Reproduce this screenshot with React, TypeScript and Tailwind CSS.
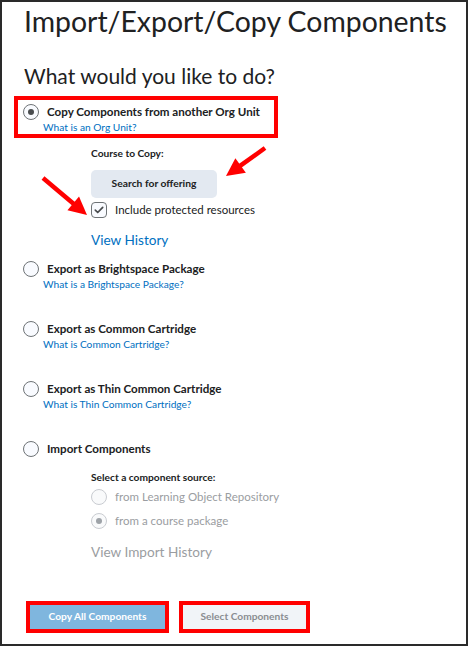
import React from 'react';

const Radio = ({ checked = false, disabled = false }: { checked?: boolean; disabled?: boolean }) => (
  <span
    className={`flex h-[16px] w-[16px] shrink-0 items-center justify-center rounded-full border ${
      disabled ? 'border-[#c9ccd1] bg-[#f9fafb]' : 'border-[#6e7376] bg-[#f9fbff]'
    }`}
  >
    {checked && <span className={`h-[6px] w-[6px] rounded-full ${disabled ? 'bg-[#9ea3a8]' : 'bg-[#494c4e]'}`} />}
  </span>
);

const Option = ({ title, link, checked = false }: { title: string; link?: string; checked?: boolean }) => (
  <div className="flex flex-col">
    <div className="flex h-[16px] items-center gap-[8px]">
      <Radio checked={checked} />
      <span className="whitespace-nowrap text-[11.6px] font-bold leading-[16px] text-[#202122]">{title}</span>
    </div>
    {link && (
      <a className="ml-[20px] mt-[1px] whitespace-nowrap text-[10.2px] leading-[13px] text-[#006fbf]">{link}</a>
    )}
  </div>
);

const Arrow = ({ x1, y1, x2, y2 }: { x1: number; y1: number; x2: number; y2: number }) => {
  const a = Math.atan2(y2 - y1, x2 - x1);
  const len = 18;
  const w = 9;
  const bx = x2 - Math.cos(a) * len;
  const by = y2 - Math.sin(a) * len;
  const px = -Math.sin(a) * w;
  const py = Math.cos(a) * w;
  return (
    <g>
      <line x1={x1} y1={y1} x2={bx + Math.cos(a) * 2} y2={by + Math.sin(a) * 2} stroke="#ff0000" strokeWidth={4.5} />
      <polygon points={`${x2},${y2} ${bx + px},${by + py} ${bx - px},${by - py}`} fill="#ff0000" />
    </g>
  );
};

export default function App() {
  return (
    <div
      className="relative h-[646px] w-[468px] overflow-hidden border-2 border-[#2a2a2a] bg-white text-[#202122]"
      style={{ fontFamily: 'Lato, "Open Sans", sans-serif' }}
    >
      <div className="flex flex-col pl-[22px]">
        <h1 className="mt-[3px] whitespace-nowrap text-[28.4px] leading-[32px] text-[#202122]">
          Import/Export/Copy Components
        </h1>
        <h2 className="mt-[25px] whitespace-nowrap text-[21px] leading-[28px] text-[#202122]">What would you like to do?</h2>

        <div className="ml-[-10px] mt-[6px] w-[264px] border-[4px] border-[#ff0000] pl-[5px] pt-[4px]">
          <Option title="Copy Components from another Org Unit" link="What is an Org Unit?" checked />
        </div>

        <div className="ml-[67px] mt-[8px] flex flex-col items-start">
          <span className="text-[10.2px] font-bold leading-[14px]">Course to Copy:</span>
          <button className="mt-[10px] h-[28px] w-[126px] rounded-[5px] bg-[#e3e9f1] text-[10.3px] font-bold text-[#202122]">
            Search for offering
          </button>
          <div className="mt-[4px] flex h-[16px] items-center gap-[8px]">
            <span className="flex h-[16px] w-[16px] items-center justify-center rounded-[4px] border border-[#6e7376] bg-[#f9fbff]">
              <svg width="10" height="8" viewBox="0 0 10 8">
                <path
                  d="M1.3 4.2 L3.7 6.5 L8.7 1.3"
                  fill="none"
                  stroke="#494c4e"
                  strokeWidth="1.7"
                  strokeLinecap="round"
                  strokeLinejoin="round"
                />
              </svg>
            </span>
            <span className="whitespace-nowrap text-[11.5px] leading-[16px] text-[#202122]">Include protected resources</span>
          </div>
          <a className="mt-[13px] text-[13.6px] leading-[18px] text-[#006fbf]">View History</a>
        </div>

        <div className="ml-[-1px] mt-[12px] flex flex-col gap-[30px]">
          <Option title="Export as Brightspace Package" link="What is a Brightspace Package?" />
          <Option title="Export as Common Cartridge" link="What is Common Cartridge?" />
          <Option title="Export as Thin Common Cartridge" link="What is Thin Common Cartridge?" />
          <Option title="Import Components" />
        </div>

        <div className="ml-[67px] mt-[13px] flex flex-col items-start">
          <span className="text-[10.2px] font-bold leading-[14px]">Select a component source:</span>
          <div className="mt-[5px] flex h-[16px] items-center gap-[8px]">
            <Radio disabled />
            <span className="whitespace-nowrap text-[11.5px] leading-[16px] text-[#9a9da1]">
              from Learning Object Repository
            </span>
          </div>
          <div className="mt-[8px] flex h-[16px] items-center gap-[8px]">
            <Radio disabled checked />
            <span className="whitespace-nowrap text-[11.5px] leading-[16px] text-[#9a9da1]">from a course package</span>
          </div>
          <span className="mt-[14px] text-[13.6px] leading-[18px] text-[#9a9da1]">View Import History</span>
        </div>

        <div className="ml-[2px] mt-[40px] flex gap-[10px]">
          <div className="border-[4px] border-[#ff0000]">
            <button className="flex h-[24px] w-[135px] items-center justify-center bg-[#7fb6de] text-[10.2px] font-bold text-white">
              Copy All Components
            </button>
          </div>
          <div className="border-[4px] border-[#ff0000]">
            <button className="flex h-[24px] w-[123px] items-center justify-center bg-[#f1f4f8] text-[10.2px] font-bold text-[#8a8d91]">
              Select Components
            </button>
          </div>
        </div>
      </div>

      <svg className="pointer-events-none absolute left-[-2px] top-[-2px]" width="468" height="646">
        <Arrow x1={265} y1={148} x2={226} y2={176} />
        <Arrow x1={43} y1={178} x2={87} y2={215} />
      </svg>
    </div>
  );
}
